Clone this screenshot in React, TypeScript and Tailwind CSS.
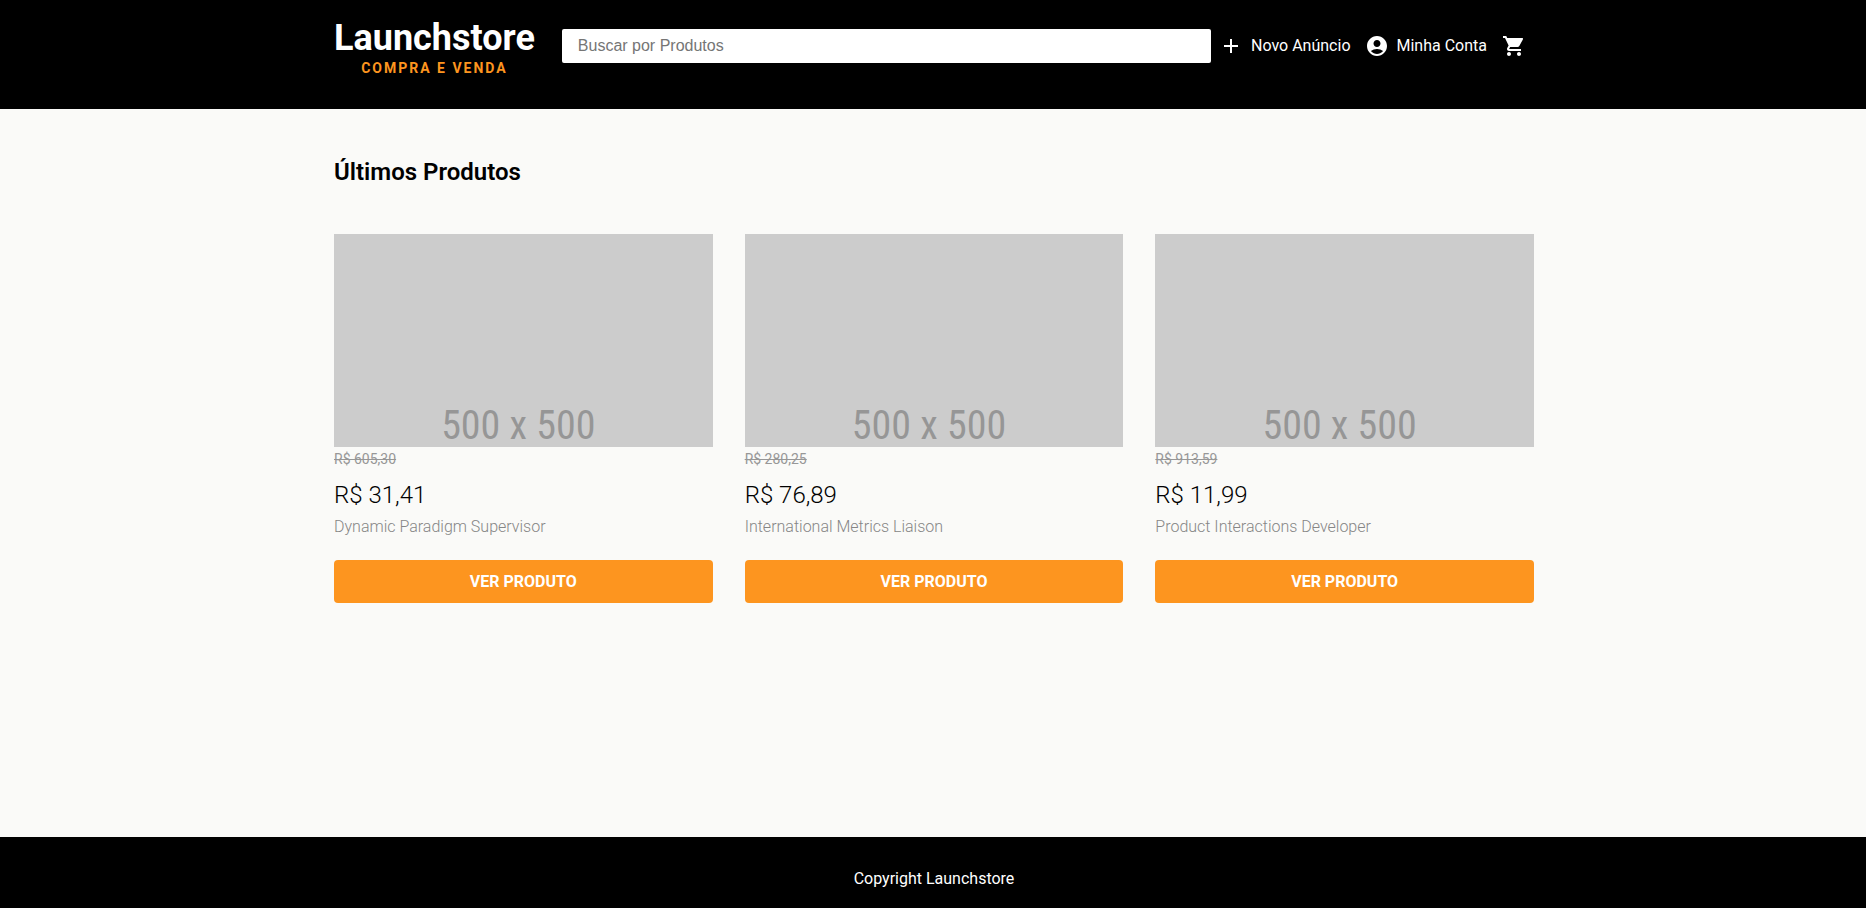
import { MdAccountCircle, MdAdd, MdShoppingCart } from "react-icons/md";

interface Product {
  id: number;
  name: string;
  oldPrice: string;
  price: string;
}

const products: Product[] = [
  { id: 1, name: "Dynamic Paradigm Supervisor", oldPrice: "R$ 605,30", price: "R$ 31,41" },
  { id: 2, name: "International Metrics Liaison", oldPrice: "R$ 280,25", price: "R$ 76,89" },
  { id: 3, name: "Product Interactions Developer", oldPrice: "R$ 913,59", price: "R$ 11,99" },
];

function Header() {
  return (
    <header className="bg-black pt-4 pb-7 text-white">
      <div className="mx-auto flex max-w-[1202px] items-start pl-0.5">
        <a href="#" className="flex shrink-0 flex-col items-center pt-1">
          <span className="text-[36px] leading-9 font-bold">Launchstore</span>
          <span className="py-1 text-sm leading-[17px] font-bold tracking-[2px] text-[#fd951f]">
            COMPRA E VENDA
          </span>
        </a>
        <form role="search" className="ml-[27px] flex min-w-0 flex-1 pt-[13px]">
          <input
            type="text"
            aria-label="Buscar por Produtos"
            placeholder="Buscar por Produtos"
            className="h-[34px] w-full rounded-xs bg-white px-4 font-['Liberation_Sans',Arial,sans-serif] text-base text-black placeholder:text-[#757575]"
          />
        </form>
        <nav className="flex h-15 shrink-0 items-center pl-2 leading-6">
          <a href="#" className="flex items-center gap-2">
            <MdAdd size={24} />
            Novo Anúncio
          </a>
          <a href="#" className="ml-3.5 flex items-center gap-2">
            <MdAccountCircle size={24} />
            Minha Conta
          </a>
          <a href="#" aria-label="Carrinho" className="ml-[15px] pr-2">
            <MdShoppingCart size={24} />
          </a>
        </nav>
      </div>
    </header>
  );
}

function ProductCard({ product }: { product: Product }) {
  return (
    <article className="flex flex-col">
      <div className="flex h-[213px] items-end justify-center bg-[#cccccc] pr-2.5 font-['Roboto_Condensed','Arial_Narrow','Liberation_Sans',sans-serif] text-[40px] leading-[42px] text-[#969696]">
        500 x 500
      </div>
      <s className="text-sm leading-6 text-[#979797]">{product.oldPrice}</s>
      <p className="pt-2 text-2xl leading-8 font-light text-black">{product.price}</p>
      <h2 className="pt-1 text-base leading-6 font-light text-[#868686]">{product.name}</h2>
      <a
        href="#"
        className="mt-[21px] flex h-[43px] items-center justify-center rounded-sm bg-[#fd951f] text-base font-bold text-white"
      >
        VER PRODUTO
      </a>
    </article>
  );
}

export default function App() {
  return (
    <div className="flex min-h-screen flex-col bg-[#fafaf8] font-['Roboto',sans-serif] text-base">
      <Header />
      <main className="mx-auto w-full max-w-[1202px] flex-1 pt-[49px] pl-0.5">
        <h1 className="text-2xl leading-[29px] font-semibold text-black">Últimos Produtos</h1>
        <section className="mt-[47px] grid grid-cols-3 gap-8">
          {products.map((product) => (
            <ProductCard key={product.id} product={product} />
          ))}
        </section>
      </main>
      <footer className="flex h-[71px] items-center justify-center bg-black pt-3 pl-0.5 text-white">
        Copyright Launchstore
      </footer>
    </div>
  );
}
